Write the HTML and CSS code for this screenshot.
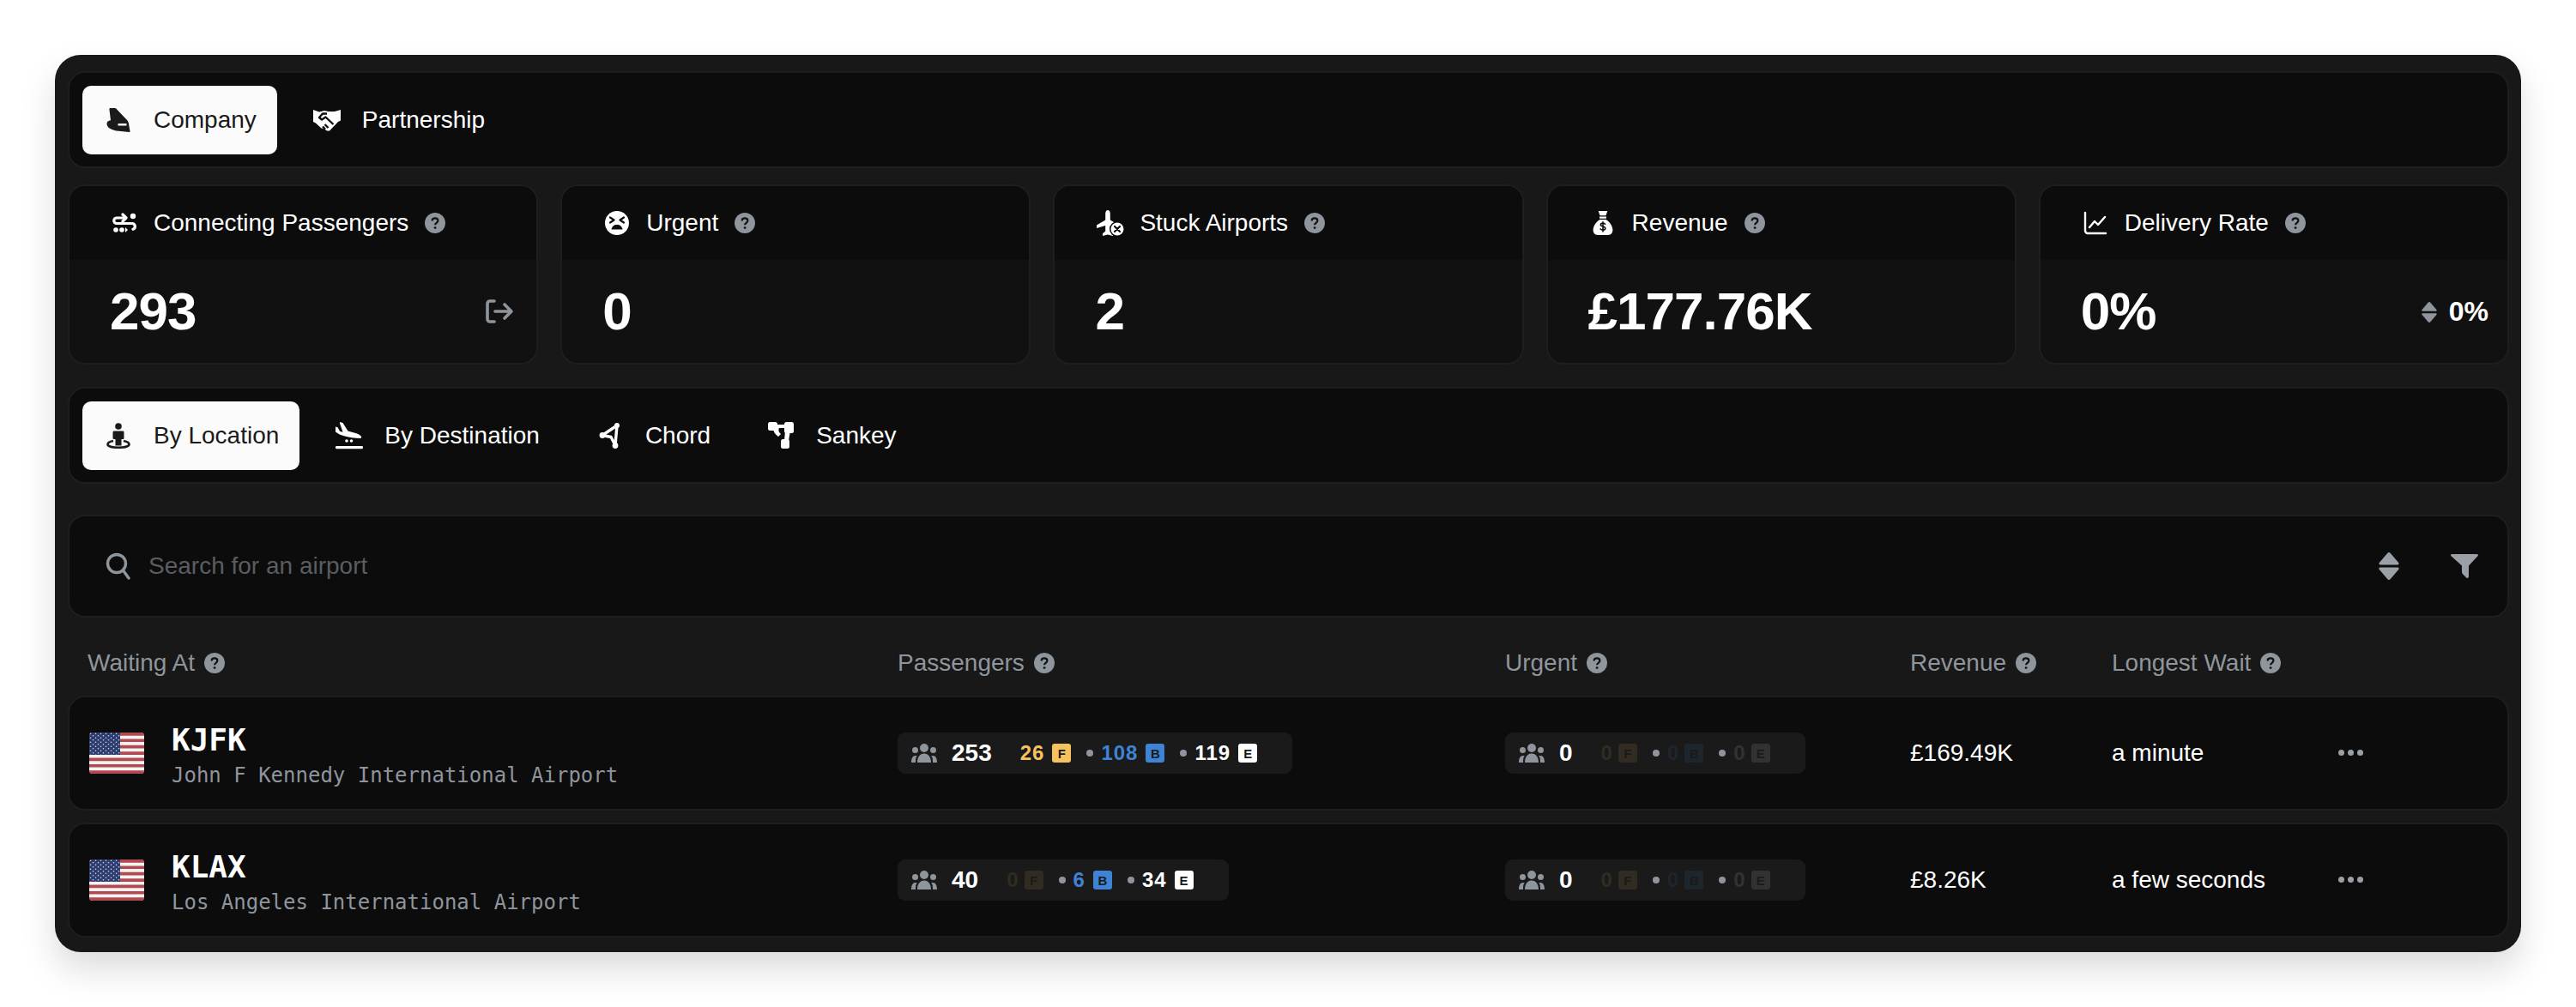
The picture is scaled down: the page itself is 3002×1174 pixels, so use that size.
FILE: index.html
```html
<!DOCTYPE html>
<html lang="en">
<head>
  <meta charset="UTF-8" />
  <title>Connecting Passengers</title>
  <link rel="stylesheet" href="styles.css">
</head>
<body>

  <!-- ICONS -->
  <svg class="sprite" width="0" height="0">
    <symbol id="i-help" viewBox="0 0 24 24">
      <circle cx="12" cy="12" r="12" fill="#8f959c"/>
      <path d="M8.6 9.6c0-2 1.5-3.2 3.4-3.2s3.4 1.1 3.4 2.9c0 2.6-3.3 2.6-3.3 5" fill="none" stroke="#111" stroke-width="2.2"/>
      <circle cx="12.1" cy="17.6" r="1.4" fill="#111"/>
    </symbol>
    <symbol id="i-seat" viewBox="-2.500 -2 32 32">
      <path fill-rule="evenodd" d="M4 0h5c1 0 1.600.3 2.200 1L24 14.500c.8.9 1.200 1.800 1.400 3L27 27c.1.7-.4 1.100-1 1l-12-1.200C6 26 0 23 0 18.500c0-2.500 1.500-4 4.500-4.300L3 2C2.800.8 3 0 4 0zM13 18v2.400h10V18z"/>
    </symbol>
    <symbol id="i-shake" viewBox="0 0 32 26">
      <path fill="#fff" d="M0 1l7 2.500 6-1.500 5 1 7 0 7-2v12.500l-3 1.500-10 10.500h-3l-3.500-2.500-3-.5L3 16.500 0 15z"/>
      <path fill="none" stroke="#0c0c0c" stroke-width="2.400" stroke-linejoin="round" d="M16 5.500H11l-4 4.500 3 2.500 4.500-3 9 8.500M17.500 22l-4-4M14 23.500l-3-3"/>
    </symbol>
    <symbol id="i-transfer" viewBox="0 0 30 24">
      <g fill="none" stroke="#fff" stroke-width="3.200" stroke-linecap="round" stroke-linejoin="round">
        <path d="M16 6H6a3.200 3.200 0 0 0 0 6.500h18a3.500 3.500 0 0 1 1 6.800"/>
        <path d="M13 2l4 4-4 4"/>
      </g>
      <circle cx="25" cy="4" r="3.200" fill="#fff"/>
      <circle cx="5" cy="20" r="2.800" fill="#fff"/>
      <circle cx="12" cy="20" r="2.800" fill="#fff"/>
      <path d="M16 17v6l3-3z" fill="#fff"/>
    </symbol>
    <symbol id="i-sad" viewBox="0 0 28 28">
      <circle cx="14" cy="14" r="14" fill="#fff"/>
      <g fill="none" stroke="#0c0c0c" stroke-width="2.200" stroke-linecap="round" stroke-linejoin="round">
        <path d="M6 7.500l4.500 3-4.500 3M22 7.500l-4.500 3 4.500 3"/>
      </g>
      <path d="M7.500 21.500c.5-3.500 3-5.500 6.500-5.500s6 2 6.500 5.500z" fill="#0c0c0c"/>
    </symbol>
    <symbol id="i-planex" viewBox="0 0 33 31">
      <path fill="#fff" d="M13 0c1.800 0 2.800 2 2.800 4v7.500L26 17.500V21l-10.200-3v6.500l3.200 2.700V30l-6-1.500L7 30v-2.800l3.200-2.700V18L0 21v-3.500l10.200-6V4c0-2 1-4 2.800-4z"/>
      <circle cx="24" cy="22" r="9" fill="#0c0c0c"/>
      <circle cx="24" cy="22" r="7.500" fill="#fff"/>
      <path d="M21 19l6 6m0-6l-6 6" stroke="#0c0c0c" stroke-width="2.200" stroke-linecap="round"/>
    </symbol>
    <symbol id="i-bag" viewBox="0 0 26 32">
      <path fill="#fff" d="M7 0h12l-2 6H9zM8.500 7.500h9V10h-9zM9 11.500h8c5 3 9 8.500 9 14 0 4-2.500 6.500-6 6.500H6c-3.500 0-6-2.500-6-6.500 0-5.500 4-11 9-14z"/>
      <path fill="none" stroke="#0c0c0c" stroke-width="1.800" stroke-linecap="round" d="M16 17.500c-.6-1-1.700-1.400-3-1.400-1.800 0-3 .9-3 2.200 0 3.200 6.200 1.600 6.200 4.800 0 1.300-1.300 2.200-3.200 2.200-1.500 0-2.700-.5-3.300-1.500M13 14.500v13"/>
    </symbol>
    <symbol id="i-chart" viewBox="0 0 28 28">
      <path fill="none" stroke="#fff" stroke-width="2.400" stroke-linecap="round" stroke-linejoin="round" d="M2 2v21a3 3 0 0 0 3 3h21M7 19l6-7 4 4 8-9"/>
    </symbol>
    <symbol id="i-logout" viewBox="0 0 33 28">
      <path fill="none" stroke="#8f959c" stroke-width="3.600" stroke-linecap="round" stroke-linejoin="round" d="M10 2H5a3 3 0 0 0-3 3v18a3 3 0 0 0 3 3h5M11 14h19M22 6l8 8-8 8"/>
    </symbol>
    <symbol id="i-updown" viewBox="0 0 24 32">
      <path d="M12 0c.8 0 1.300.4 1.800 1L23.200 12c.9 1.200.3 2.400-1.200 2.400H2C.5 14.400-.1 13.200.800 12L10.200 1c.5-.6 1-1 1.800-1zM2 17.600h20c1.500 0 2.100 1.200 1.200 2.400l-9.400 11c-.5.6-1 1-1.800 1s-1.300-.4-1.800-1L.8 20C-.1 18.800.5 17.600 2 17.600z"/>
    </symbol>
    <symbol id="i-pin" viewBox="-2 -1 32 32">
      <circle cx="14" cy="4" r="3.800"/>
      <path d="M9 9.500h10c1 0 1.500.6 1.500 1.500v6.500c0 1-.6 1.500-1.500 1.500h-1.500v7.500h-7V19H9c-1 0-1.500-.6-1.500-1.500V11c0-.9.500-1.500 1.500-1.500z"/>
      <path fill="none" stroke="currentColor" stroke-width="2.600" d="M8 21c-3.800.8-6.500 2.200-6.500 4 0 2.200 5.500 3.800 12.500 3.800S26.500 27.200 26.500 25c0-1.800-2.700-3.200-6.500-4"/>
    </symbol>
    <symbol id="i-land" viewBox="0 0 32 32">
      <path fill="#fff" d="M5 0l3.500 1 6 9.500 9 2.500c3 .8 5.500 2.300 6.500 4 .6 1 0 2-1.300 2-7 0-18-2-24-4.500L0 11.500V5.500l2.500.7 2.500 4.500 3.500 1L5 1.500z"/>
      <circle cx="13" cy="22" r="1.800" fill="#fff"/><circle cx="18.500" cy="22" r="1.800" fill="#fff"/>
      <rect x="0" y="28" width="32" height="3.200" rx="1.200" fill="#fff"/>
    </symbol>
    <symbol id="i-chord" viewBox="0 0 28 32">
      <path fill="none" stroke="#fff" stroke-width="3.400" stroke-linejoin="round" d="M22 4L5 15.500l10 2 5 9.500z"/>
      <circle cx="22" cy="4" r="3" fill="#fff"/><circle cx="5" cy="15.500" r="3.400" fill="#fff"/><circle cx="20" cy="27.500" r="3.400" fill="#fff"/>
    </symbol>
    <symbol id="i-sankey" viewBox="0 0 30 32">
      <rect x="0" y="0" width="11" height="10" rx="2.500" fill="#fff"/>
      <rect x="19" y="0" width="11" height="13" rx="2.500" fill="#fff"/>
      <rect x="15" y="20" width="10" height="11" rx="2.500" fill="#fff"/>
      <path d="M9 3h12v4H13c-1 2-1 4 2 7l-3 3c-4-3-6-6-6-10z" fill="#fff"/>
      <path d="M20 10h6l-2 12h-5z" fill="#fff"/>
    </symbol>
    <symbol id="i-search" viewBox="0 0 30 32">
      <circle cx="13" cy="13" r="10.500" fill="none" stroke="#8f959c" stroke-width="3.400"/>
      <path d="M20.500 21L27 30" fill="none" stroke="#8f959c" stroke-width="3.400" stroke-linecap="round"/>
    </symbol>
    <symbol id="i-filter" viewBox="0 0 32 28">
      <path fill="#9aa0a6" d="M1.500 0h29c1.300 0 1.900 1.300 1 2.300L21 13.500V26c0 1.600-1.600 2.600-2.800 1.400l-4-4c-.8-.7-1.200-1.400-1.200-2.400v-7.500L.5 2.300C-.4 1.300.2 0 1.500 0z"/>
    </symbol>
    <symbol id="i-users" viewBox="0 0 30 22">
      <circle cx="15" cy="5" r="5"/><circle cx="4.500" cy="7.500" r="3.500"/><circle cx="25.500" cy="7.500" r="3.500"/>
      <path d="M7 22c0-6 3-10.500 8-10.500S23 16 23 22zM0 22c0-4.500 1.500-8 5-8 .6 0 1.200.1 1.700.3C5 16 5 19 5 22zM30 22c0-4.500-1.500-8-5-8-.6 0-1.200.1-1.700.3C25 16 25 19 25 22z"/>
    </symbol>
    <symbol id="i-flag" viewBox="0 0 64 48">
      <defs>
        <clipPath id="flagClip"><rect width="64" height="48" rx="4"/></clipPath>
        <pattern id="stars" width="6" height="5" patternUnits="userSpaceOnUse">
          <circle cx="1.500" cy="1.300" r=".8" fill="#d6d8e0"/><circle cx="4.500" cy="3.800" r=".8" fill="#d6d8e0"/>
        </pattern>
      </defs>
      <g clip-path="url(#flagClip)">
        <rect width="64" height="48" fill="#f2f2f2"/>
        <path fill="#b04a50" d="M0 0h64v3.700H0zM0 7.400h64v3.700H0zM0 14.800h64v3.700H0zM0 22.200h64v3.700H0zM0 29.500h64v3.700H0zM0 36.900h64v3.700H0zM0 44.300h64V48H0z"/>
        <rect width="36" height="25.900" fill="#2d3d70"/>
        <rect width="36" height="25.900" fill="url(#stars)"/>
      </g>
    </symbol>
  </svg>

  <div class="panel">

    <!-- TOP TABS -->
    <div class="tabbar tabbar-top">
      <div class="tab active"><svg class="tab-icon"><use href="#i-seat"/></svg>Company</div>
      <div class="tab"><svg class="tab-icon"><use href="#i-shake"/></svg>Partnership</div>
    </div>

    <!-- STATS -->
    <div class="stats">
      <div class="stat">
        <div class="stat-head">
          <svg class="stat-icon"><use href="#i-transfer"/></svg>
          <span>Connecting Passengers</span>
          <svg class="help"><use href="#i-help"/></svg>
        </div>
        <div class="stat-body">
          <span class="stat-value">293</span>
          <svg class="stat-logout"><use href="#i-logout"/></svg>
        </div>
      </div>
      <div class="stat">
        <div class="stat-head">
          <svg class="stat-icon"><use href="#i-sad"/></svg>
          <span>Urgent</span>
          <svg class="help"><use href="#i-help"/></svg>
        </div>
        <div class="stat-body"><span class="stat-value">0</span></div>
      </div>
      <div class="stat">
        <div class="stat-head">
          <svg class="stat-icon stat-icon-wide"><use href="#i-planex"/></svg>
          <span>Stuck Airports</span>
          <svg class="help"><use href="#i-help"/></svg>
        </div>
        <div class="stat-body"><span class="stat-value">2</span></div>
      </div>
      <div class="stat">
        <div class="stat-head">
          <svg class="stat-icon"><use href="#i-bag"/></svg>
          <span>Revenue</span>
          <svg class="help"><use href="#i-help"/></svg>
        </div>
        <div class="stat-body"><span class="stat-value">£177.76K</span></div>
      </div>
      <div class="stat">
        <div class="stat-head">
          <svg class="stat-icon"><use href="#i-chart"/></svg>
          <span>Delivery Rate</span>
          <svg class="help"><use href="#i-help"/></svg>
        </div>
        <div class="stat-body">
          <span class="stat-value">0%</span>
          <span class="stat-delta"><svg class="delta-icon"><use href="#i-updown"/></svg>0%</span>
        </div>
      </div>
    </div>

    <!-- VIEW TABS -->
    <div class="tabbar tabbar-view">
      <div class="tab active"><svg class="tab-icon"><use href="#i-pin"/></svg>By Location</div>
      <div class="tab"><svg class="tab-icon"><use href="#i-land"/></svg>By Destination</div>
      <div class="tab"><svg class="tab-icon"><use href="#i-chord"/></svg>Chord</div>
      <div class="tab"><svg class="tab-icon"><use href="#i-sankey"/></svg>Sankey</div>
    </div>

    <!-- SEARCH -->
    <div class="search">
      <svg class="search-icon"><use href="#i-search"/></svg>
      <input class="search-input" type="text" placeholder="Search for an airport">
      <svg class="sort-icon"><use href="#i-updown"/></svg>
      <svg class="filter-icon"><use href="#i-filter"/></svg>
    </div>

    <!-- TABLE -->
    <div class="table-head cols">
      <div class="th">Waiting At <svg class="help"><use href="#i-help"/></svg></div>
      <div class="th">Passengers <svg class="help"><use href="#i-help"/></svg></div>
      <div class="th">Urgent <svg class="help"><use href="#i-help"/></svg></div>
      <div class="th">Revenue <svg class="help"><use href="#i-help"/></svg></div>
      <div class="th">Longest Wait <svg class="help"><use href="#i-help"/></svg></div>
    </div>

    <div class="row cols">
      <div class="airport">
        <svg class="flag"><use href="#i-flag"/></svg>
        <div class="airport-text">
          <div class="code">KJFK</div>
          <div class="name">John F Kennedy International Airport</div>
        </div>
      </div>
      <div>
        <div class="chip">
          <svg class="chip-icon"><use href="#i-users"/></svg>
          <span class="total">253</span>
          <span class="seg first"><b>26</b><i class="badge">F</i></span>
          <span class="dot"></span>
          <span class="seg business"><b>108</b><i class="badge">B</i></span>
          <span class="dot"></span>
          <span class="seg economy"><b>119</b><i class="badge">E</i></span>
        </div>
      </div>
      <div>
        <div class="chip">
          <svg class="chip-icon"><use href="#i-users"/></svg>
          <span class="total">0</span>
          <span class="seg first dim"><b>0</b><i class="badge">F</i></span>
          <span class="dot"></span>
          <span class="seg business dim"><b>0</b><i class="badge">B</i></span>
          <span class="dot"></span>
          <span class="seg economy dim"><b>0</b><i class="badge">E</i></span>
        </div>
      </div>
      <div>£169.49K</div>
      <div>a minute</div>
      <div class="more"><span></span><span></span><span></span></div>
    </div>

    <div class="row cols">
      <div class="airport">
        <svg class="flag"><use href="#i-flag"/></svg>
        <div class="airport-text">
          <div class="code">KLAX</div>
          <div class="name">Los Angeles International Airport</div>
        </div>
      </div>
      <div>
        <div class="chip">
          <svg class="chip-icon"><use href="#i-users"/></svg>
          <span class="total">40</span>
          <span class="seg first dim"><b>0</b><i class="badge">F</i></span>
          <span class="dot"></span>
          <span class="seg business"><b>6</b><i class="badge">B</i></span>
          <span class="dot"></span>
          <span class="seg economy"><b>34</b><i class="badge">E</i></span>
        </div>
      </div>
      <div>
        <div class="chip">
          <svg class="chip-icon"><use href="#i-users"/></svg>
          <span class="total">0</span>
          <span class="seg first dim"><b>0</b><i class="badge">F</i></span>
          <span class="dot"></span>
          <span class="seg business dim"><b>0</b><i class="badge">B</i></span>
          <span class="dot"></span>
          <span class="seg economy dim"><b>0</b><i class="badge">E</i></span>
        </div>
      </div>
      <div>£8.26K</div>
      <div>a few seconds</div>
      <div class="more"><span></span><span></span><span></span></div>
    </div>

  </div>
</body>
</html>
```

FILE: styles.css
```css
* {
  margin: 0; padding: 0;
  box-sizing: border-box;
}

body {
  background: #fff;
  padding: 64px;
  font-family: 'Liberation Sans', Arial, sans-serif;
  font-size: 28px;
  color: #fff;
}

.sprite {
  position: absolute;
}

.panel {
  background: #181818;
  border-radius: 30px;
  padding: 19px 14px 17px 15px;
  box-shadow: 0 20px 40px rgba(0,0,0,0.14);
}

/* tabs */
.tabbar {
  display: flex;
  gap: 16px;
  height: 113px;
  padding: 15px;
  background: #0c0c0c;
  border: 2px solid #1e1e1e;
  border-radius: 20px;
}

.tabbar-top {
  margin-bottom: 19px;
}

.tabbar-view {
  margin-bottom: 36px;
}

.tab {
  display: flex;
  align-items: center;
  gap: 25px;
  height: 80px;
  padding: 0 24px 0 26px;
  border-radius: 10px;
  color: #fff;
}

.tab.active {
  background: #fbfbfb;
  color: #1a1a1a;
  fill: #1a1a1a;
}

.tab-icon {
  width: 32px;
  height: 32px;
}

/* stat cards */
.stats {
  display: grid;
  grid-template-columns: repeat(5, 1fr);
  gap: 26px;
  margin-bottom: 26px;
}

.stat {
  height: 210px;
  background: #111;
  border: 2px solid #1e1e1e;
  border-radius: 20px;
  overflow: hidden;
}

.stat-head {
  display: flex;
  align-items: center;
  height: 86px;
  padding-left: 49px;
  background: #0c0c0c;
}

.stat-icon {
  width: 30px;
  height: 28px;
  margin-right: 19px;
}

.stat-icon-wide {
  width: 33px;
  height: 31px;
  margin-right: 17px;
}

.help {
  width: 24px;
  height: 24px;
  flex: none;
}

.stat-head .help {
  margin-left: 19px;
}

.stat-body {
  display: flex;
  align-items: center;
  justify-content: space-between;
  height: 120px;
  padding: 0 26px 1px 47px;
}

.stat-value {
  font-size: 62px;
  font-weight: 700;
  letter-spacing: -1px;
}

.stat-logout {
  width: 33px;
  height: 28px;
}

.stat-delta {
  display: flex;
  align-items: center;
  gap: 14px;
  margin: 2px -4px 0 0;
  font-size: 32px;
  font-weight: 700;
}

.delta-icon {
  width: 18px;
  height: 24px;
  fill: #8f959c;
}

/* search */
.search {
  display: flex;
  align-items: center;
  height: 120px;
  padding: 0 34px 0 42px;
  background: #0c0c0c;
  border: 2px solid #1e1e1e;
  border-radius: 20px;
}

.search-icon {
  width: 30px;
  height: 32px;
}

.search-input {
  flex: 1;
  margin-left: 20px;
  background: transparent;
  border: none;
  outline: none;
  color: #fff;
  font-family: 'Liberation Sans', Arial, sans-serif;
  font-size: 28px;
}

.search-input::placeholder {
  color: #5a5d61;
  opacity: 1;
}

.sort-icon {
  width: 24px;
  height: 32px;
  fill: #9aa0a6;
}

.filter-icon {
  width: 32px;
  height: 28px;
  margin-left: 60px;
}

/* table */
.cols {
  display: grid;
  grid-template-columns: 944px 708px 472px 235px 264px 1fr;
  align-items: center;
}

.table-head {
  height: 91px;
  padding: 14px 0 0 23px;
}

.th {
  display: flex;
  align-items: center;
  gap: 11px;
  color: #8f959c;
}

.row {
  height: 134px;
  padding-left: 21px;
  background: #0c0c0c;
  border: 2px solid #1e1e1e;
  border-radius: 20px;
  margin-bottom: 14px;
}

.row:last-child {
  margin-bottom: 0;
}

.airport {
  display: flex;
  align-items: center;
  gap: 32px;
  margin-left: 2px;
}

.airport-text {
  padding-top: 6px;
}

.flag {
  width: 64px;
  height: 48px;
  flex: none;
}

.code {
  font-family: 'DejaVu Sans Mono', monospace;
  font-size: 36px;
  font-weight: 700;
  line-height: 40px;
}

.name {
  margin-top: 6px;
  font-family: 'DejaVu Sans Mono', monospace;
  font-size: 24px;
  line-height: 30px;
  color: #8f959c;
}

.chip {
  display: inline-flex;
  align-items: center;
  height: 48px;
  padding: 0 41px 0 16px;
  background: #1a1a1a;
  border-radius: 9px;
}

.chip-icon {
  width: 30px;
  height: 22px;
  fill: #8f959c;
  margin-right: 17px;
}

.total {
  font-weight: 700;
  margin-right: 33px;
}

.seg {
  display: flex;
  align-items: center;
  gap: 9px;
}

.seg b {
  font-size: 24px;
  letter-spacing: 1px;
}

.badge {
  display: flex;
  align-items: center;
  justify-content: center;
  width: 22px;
  height: 22px;
  border-radius: 3px;
  color: #1a1a1a;
  font-size: 15px;
  font-weight: 700;
  font-style: normal;
}

.first { color: #f6c25f; }
.first .badge { background: #f6c25f; }
.business { color: #3f83d4; }
.business .badge { background: #3f83d4; }
.economy { color: #fff; }
.economy .badge { background: #fff; }

.dim {
  gap: 7px;
  opacity: 0.1;
}

.dim b {
  letter-spacing: 0;
}

.dot {
  width: 8px;
  height: 8px;
  margin: 0 9px 0 18px;
  border-radius: 50%;
  background: #8f959c;
}

.more {
  display: flex;
  gap: 4px;
  padding-bottom: 2px;
}

.more span {
  width: 7px;
  height: 7px;
  border-radius: 50%;
  background: #9aa0a6;
}
```
